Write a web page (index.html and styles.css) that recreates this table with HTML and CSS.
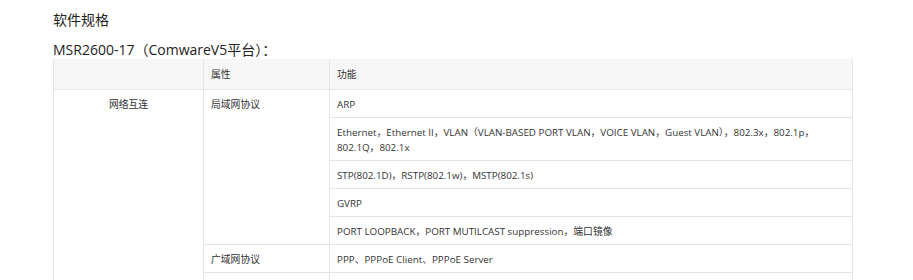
FILE: index.html
```html
<!DOCTYPE html>
<html lang="zh-CN">
<head>
  <meta charset="UTF-8">
  <title>软件规格</title>
  <link rel="stylesheet" href="styles.css">
</head>
<body>
  <div class="content">
    <h3 class="section-title">软件规格</h3>
    <h4 class="model-title">MSR2600-17（ComwareV5平台）：</h4>
    <table class="spec-table">
      <thead>
        <tr>
          <th class="col-cat"></th>
          <th class="col-attr">属性</th>
          <th>功能</th>
        </tr>
      </thead>
      <tbody>
        <tr>
          <td class="cat" rowspan="7">网络互连</td>
          <td rowspan="5">局域网协议</td>
          <td>ARP</td>
        </tr>
        <tr>
          <td>Ethernet，Ethernet II，VLAN（VLAN-BASED PORT VLAN，VOICE VLAN，Guest VLAN），802.3x，802.1p，802.1Q，802.1x</td>
        </tr>
        <tr>
          <td>STP(802.1D)，RSTP(802.1w)，MSTP(802.1s)</td>
        </tr>
        <tr>
          <td>GVRP</td>
        </tr>
        <tr>
          <td>PORT LOOPBACK，PORT MUTILCAST suppression，端口镜像</td>
        </tr>
        <tr>
          <td>广域网协议</td>
          <td>PPP、PPPoE Client、PPPoE Server</td>
        </tr>
        <tr>
          <td>&nbsp;</td>
          <td>&nbsp;</td>
        </tr>
      </tbody>
    </table>
  </div>
</body>
</html>
```

FILE: styles.css
```css
* {
  box-sizing: border-box;
}
body {
  margin: 0;
  font-family: 'Open Sans', 'Noto Sans CJK SC', sans-serif;
  color: #333;
  background: #fff;
}
.content {
  padding: 9px 0 0 53px;
  width: 853px;
}
.section-title {
  margin: 0;
  font-size: 14px;
  font-weight: normal;
  line-height: 22px;
  color: #222;
}
.model-title {
  margin: 10px 0 0;
  font-size: 14px;
  font-weight: normal;
  line-height: 18px;
  color: #222;
}
.spec-table {
  width: 800px;
  table-layout: fixed;
  border-collapse: collapse;
  font-size: 9.8px;
  color: #333;
}
.spec-table th,
.spec-table td {
  border: 1px solid #e5e5e5;
  padding: 7px 7px 5px;
  line-height: 15px;
  text-align: left;
  vertical-align: top;
}
.spec-table th {
  background: #f7f7f7;
  font-weight: normal;
  padding: 8px 7px 7px;
}
.spec-table tr:first-child th {
  border-top: none;
}
.col-cat {
  width: 150px;
}
.col-attr {
  width: 126px;
}
.spec-table td.cat {
  text-align: center;
}
```
